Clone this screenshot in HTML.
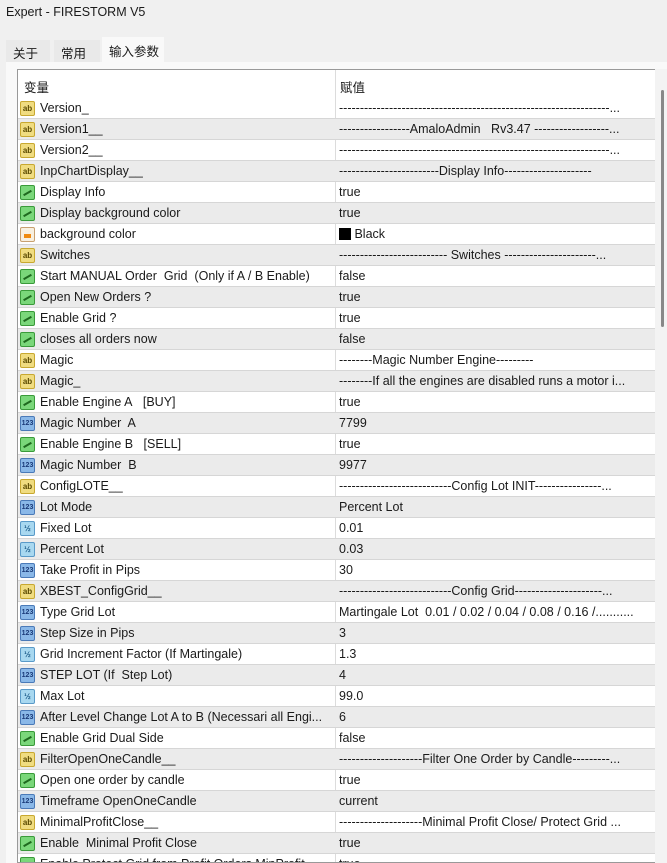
<!DOCTYPE html>
<html><head><meta charset="utf-8"><style>
*{margin:0;padding:0;box-sizing:border-box}
body{width:667px;height:863px;overflow:hidden;background:#f0f0f0;font-family:"Liberation Sans","Noto Sans CJK SC",sans-serif;font-size:12.5px;color:#1a1a1a;position:relative}
.title{position:absolute;left:6px;top:5px;font-size:12.5px}
.tab{position:absolute;top:40px;height:22px;background:#e9e9e9;padding:3px 0 0 7px;font-size:12.5px}
.tab.act{top:37px;height:26px;background:#f9f9f9;padding-top:4px}
.panel{position:absolute;left:6px;top:62px;width:661px;height:801px;background:#f9f9f9}
.tbl{position:absolute;left:17px;top:69px;width:638px;height:794px;background:#fff;border:1px solid #999;border-right:none;overflow:hidden}
.hdr{height:28px;position:relative}
.hdr span{position:absolute;top:7px}
.row{height:21px;position:relative;border-bottom:1px solid #d6d6d6;white-space:nowrap}
.row:nth-child(even){background:#ebebeb}
.row .n{position:absolute;left:22px;top:3px}
.row .v{position:absolute;left:321px;top:3px;width:312px;overflow:hidden}
.sep{position:absolute;left:317px;top:0;width:1px;height:794px;background:#dcdcdc}
.ic{position:absolute;left:2px;top:3px;width:15px;height:15px;border-radius:2px;font-size:8px;line-height:13px;text-align:center;font-weight:bold;font-style:normal}
.ab{background:#f0dc80;border:1px solid #c8a830;color:#5a4a00}
.bo{background:#7ad77a;border:1px solid #3a9a3a;overflow:hidden}
.bo:after{content:"";position:absolute;left:2px;top:6px;width:9px;height:2px;background:#1f6a1f;transform:rotate(-30deg)}
.nu{background:#8ab8e8;border:1px solid #4a7ab8;color:#1a3a78;font-size:7px}
.db{background:#a8d8f0;border:1px solid #5a9ac8;color:#1a5a88;font-size:8px}
.co{background:#f8f0e0;border:1px solid #c8a070;overflow:hidden}
.co:after{content:"";position:absolute;left:3px;top:6px;width:7px;height:4px;background:#f08a10}
.sb{position:absolute;left:655px;top:69px;width:12px;height:794px;background:#f3f3f3}
.th{position:absolute;left:661px;top:90px;width:3px;height:237px;background:#888;border-radius:2px}
</style></head><body>
<div class="title">Expert - FIRESTORM V5</div>
<div class="tab" style="left:6px;width:44px">关于</div>
<div class="tab" style="left:54px;width:46px">常用</div>
<div class="panel"></div>
<div class="tab act" style="left:102px;width:62px">输入参数</div>
<div class="tbl">
<div class="hdr"><span style="left:6px">变量</span><span style="left:322px">赋值</span></div>
<div class="sep"></div>
<div>
<div class="row"><i class="ic ab">ab</i><span class="n">Version_</span><span class="v">-----------------------------------------------------------------...</span></div>
<div class="row"><i class="ic ab">ab</i><span class="n">Version1__</span><span class="v">-----------------AmaloAdmin&nbsp;&nbsp; Rv3.47 ------------------...</span></div>
<div class="row"><i class="ic ab">ab</i><span class="n">Version2__</span><span class="v">-----------------------------------------------------------------...</span></div>
<div class="row"><i class="ic ab">ab</i><span class="n">InpChartDisplay__</span><span class="v">------------------------Display Info---------------------</span></div>
<div class="row"><i class="ic bo"></i><span class="n">Display Info</span><span class="v">true</span></div>
<div class="row"><i class="ic bo"></i><span class="n">Display background color</span><span class="v">true</span></div>
<div class="row"><i class="ic co"></i><span class="n">background color</span><span class="v"><span style="display:inline-block;width:12px;height:12px;background:#000;vertical-align:-2px"></span> Black</span></div>
<div class="row"><i class="ic ab">ab</i><span class="n">Switches</span><span class="v">-------------------------- Switches ----------------------...</span></div>
<div class="row"><i class="ic bo"></i><span class="n">Start MANUAL Order&nbsp; Grid&nbsp; (Only if A / B Enable)</span><span class="v">false</span></div>
<div class="row"><i class="ic bo"></i><span class="n">Open New Orders ?</span><span class="v">true</span></div>
<div class="row"><i class="ic bo"></i><span class="n">Enable Grid ?</span><span class="v">true</span></div>
<div class="row"><i class="ic bo"></i><span class="n">closes all orders now</span><span class="v">false</span></div>
<div class="row"><i class="ic ab">ab</i><span class="n">Magic</span><span class="v">--------Magic Number Engine---------</span></div>
<div class="row"><i class="ic ab">ab</i><span class="n">Magic_</span><span class="v">--------If all the engines are disabled runs a motor i...</span></div>
<div class="row"><i class="ic bo"></i><span class="n">Enable Engine A&nbsp;&nbsp; [BUY]</span><span class="v">true</span></div>
<div class="row"><i class="ic nu">123</i><span class="n">Magic Number&nbsp; A</span><span class="v">7799</span></div>
<div class="row"><i class="ic bo"></i><span class="n">Enable Engine B&nbsp;&nbsp; [SELL]</span><span class="v">true</span></div>
<div class="row"><i class="ic nu">123</i><span class="n">Magic Number&nbsp; B</span><span class="v">9977</span></div>
<div class="row"><i class="ic ab">ab</i><span class="n">ConfigLOTE__</span><span class="v">---------------------------Config Lot INIT----------------...</span></div>
<div class="row"><i class="ic nu">123</i><span class="n">Lot Mode</span><span class="v">Percent Lot</span></div>
<div class="row"><i class="ic db">½</i><span class="n">Fixed Lot</span><span class="v">0.01</span></div>
<div class="row"><i class="ic db">½</i><span class="n">Percent Lot</span><span class="v">0.03</span></div>
<div class="row"><i class="ic nu">123</i><span class="n">Take Profit in Pips</span><span class="v">30</span></div>
<div class="row"><i class="ic ab">ab</i><span class="n">XBEST_ConfigGrid__</span><span class="v">---------------------------Config Grid---------------------...</span></div>
<div class="row"><i class="ic nu">123</i><span class="n">Type Grid Lot</span><span class="v">Martingale Lot&nbsp; 0.01 / 0.02 / 0.04 / 0.08 / 0.16 /...........</span></div>
<div class="row"><i class="ic nu">123</i><span class="n">Step Size in Pips</span><span class="v">3</span></div>
<div class="row"><i class="ic db">½</i><span class="n">Grid Increment Factor (If Martingale)</span><span class="v">1.3</span></div>
<div class="row"><i class="ic nu">123</i><span class="n">STEP LOT (If&nbsp; Step Lot)</span><span class="v">4</span></div>
<div class="row"><i class="ic db">½</i><span class="n">Max Lot</span><span class="v">99.0</span></div>
<div class="row"><i class="ic nu">123</i><span class="n">After Level Change Lot A to B (Necessari all Engi...</span><span class="v">6</span></div>
<div class="row"><i class="ic bo"></i><span class="n">Enable Grid Dual Side</span><span class="v">false</span></div>
<div class="row"><i class="ic ab">ab</i><span class="n">FilterOpenOneCandle__</span><span class="v">--------------------Filter One Order by Candle---------...</span></div>
<div class="row"><i class="ic bo"></i><span class="n">Open one order by candle</span><span class="v">true</span></div>
<div class="row"><i class="ic nu">123</i><span class="n">Timeframe OpenOneCandle</span><span class="v">current</span></div>
<div class="row"><i class="ic ab">ab</i><span class="n">MinimalProfitClose__</span><span class="v">--------------------Minimal Profit Close/ Protect Grid ...</span></div>
<div class="row"><i class="ic bo"></i><span class="n">Enable&nbsp; Minimal Profit Close</span><span class="v">true</span></div>
<div class="row"><i class="ic bo"></i><span class="n">Enable Protect Grid from Profit Orders MinProfit</span><span class="v">true</span></div>
</div>
</div>
<div class="sb"></div><div class="th"></div>
</body></html>
